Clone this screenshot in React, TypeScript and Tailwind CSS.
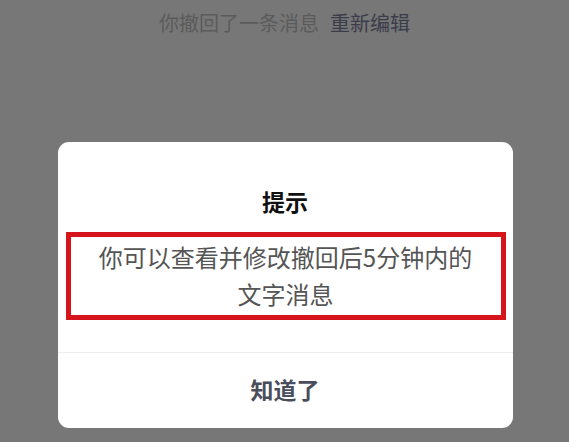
export default function App() {
  const font = { fontFamily: '"Noto Sans CJK SC", "Noto Sans", sans-serif' };
  return (
    <div
      className="flex h-[442px] w-[569px] flex-col items-center overflow-hidden bg-[#777777]"
      style={font}
    >
      {/* recalled message notice in the chat */}
      <div className="mt-[9px] flex h-[28px] items-center gap-[11px] text-[20px] leading-[28px]">
        <span className="text-[#5b5b5b]">你撤回了一条消息</span>
        <span className="text-[#3b3c4a]">重新编辑</span>
      </div>

      {/* alert dialog */}
      <div className="ml-[1px] mt-[105px] flex h-[286px] w-[455px] flex-col rounded-[11px] bg-white">
        <h2 className="pt-[43px] text-center text-[23px] font-bold leading-[32px] text-[#111111]">
          提示
        </h2>
        <div className="ml-[8px] mt-[15px] flex h-[88px] w-[440px] flex-col items-center justify-center border-[5px] border-[#d5141c] pb-[2px] text-[24px] leading-[37px] text-[#555555]">
          <p>你可以查看并修改撤回后5分钟内的</p>
          <p>文字消息</p>
        </div>
        <div className="mt-[32px] border-t border-[#ececec]" />
        <button
          type="button"
          className="flex flex-1 items-center justify-center pb-[2px] text-[23px] font-bold text-[#4a4e5c]"
        >
          知道了
        </button>
      </div>
    </div>
  );
}
